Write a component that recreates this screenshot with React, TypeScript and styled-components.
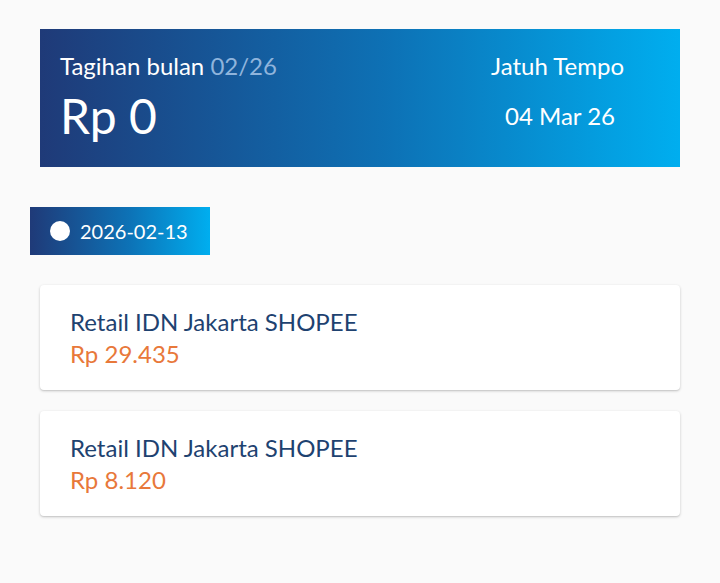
import React from "react";
import styled, { createGlobalStyle } from "styled-components";

const Global = createGlobalStyle`
  html, body { margin: 0; padding: 0; background: #fafafa; }
  body { font-family: Lato, "Open Sans", sans-serif; }
`;

const Page = styled.div`
  padding: 29px 40px 40px 40px;
  display: flex;
  flex-direction: column;
`;

const Header = styled.div`
  height: 138px;
  background: linear-gradient(90deg, #1f3a78 0%, #0d72b6 55%, #00aeef 100%);
  color: #fff;
  display: flex;
  justify-content: space-between;
  box-sizing: border-box;
  padding: 23px 56px 0 20px;
`;

const Left = styled.div`
  display: flex;
  flex-direction: column;
`;

const Label = styled.div`
  font-size: 24px;
  line-height: 28px;
`;

const Muted = styled.span`
  color: #8fb4dc;
`;

const Big = styled.div`
  font-size: 48px;
  line-height: 56px;
  margin-top: 8px;
`;

const Right = styled.div`
  display: flex;
  flex-direction: column;
  align-items: center;
`;

const RightDate = styled.div`
  font-size: 24px;
  line-height: 28px;
  margin-top: 22px;
  padding-left: 5px;
`;

const Chip = styled.div`
  margin: 40px 0 0 -10px;
  width: 180px;
  height: 48px;
  background: linear-gradient(90deg, #1f3a78 0%, #0d72b6 55%, #00aeef 100%);
  color: #fff;
  display: flex;
  align-items: center;
  box-sizing: border-box;
  padding-left: 20px;
  gap: 10px;
  font-size: 20px;
`;

const Dot = styled.span`
  width: 20px;
  height: 20px;
  border-radius: 50%;
  background: #fff;
`;

const List = styled.div`
  margin-top: 30px;
  display: flex;
  flex-direction: column;
  gap: 21px;
`;

const Card = styled.div`
  background: #fff;
  border-radius: 4px;
  box-shadow: 0 1px 3px rgba(0, 0, 0, 0.2), 0 1px 1px rgba(0, 0, 0, 0.06);
  height: 105px;
  box-sizing: border-box;
  padding: 23px 30px 0 30px;
  display: flex;
  flex-direction: column;
`;

const Title = styled.div`
  color: #1e4270;
  font-size: 24px;
  line-height: 28px;
`;

const Amount = styled.div`
  color: #e8783a;
  font-size: 24px;
  line-height: 28px;
  margin-top: 4px;
`;

const items = [
  { title: "Retail IDN Jakarta SHOPEE", amount: "Rp 29.435" },
  { title: "Retail IDN Jakarta SHOPEE", amount: "Rp 8.120" },
];

export default function App() {
  return (
    <>
      <Global />
      <Page>
        <Header>
          <Left>
            <Label>
              Tagihan bulan <Muted>02/26</Muted>
            </Label>
            <Big>Rp 0</Big>
          </Left>
          <Right>
            <Label>Jatuh Tempo</Label>
            <RightDate>04 Mar 26</RightDate>
          </Right>
        </Header>
        <Chip>
          <Dot />
          2026-02-13
        </Chip>
        <List>
          {items.map((it, i) => (
            <Card key={i}>
              <Title>{it.title}</Title>
              <Amount>{it.amount}</Amount>
            </Card>
          ))}
        </List>
      </Page>
    </>
  );
}
